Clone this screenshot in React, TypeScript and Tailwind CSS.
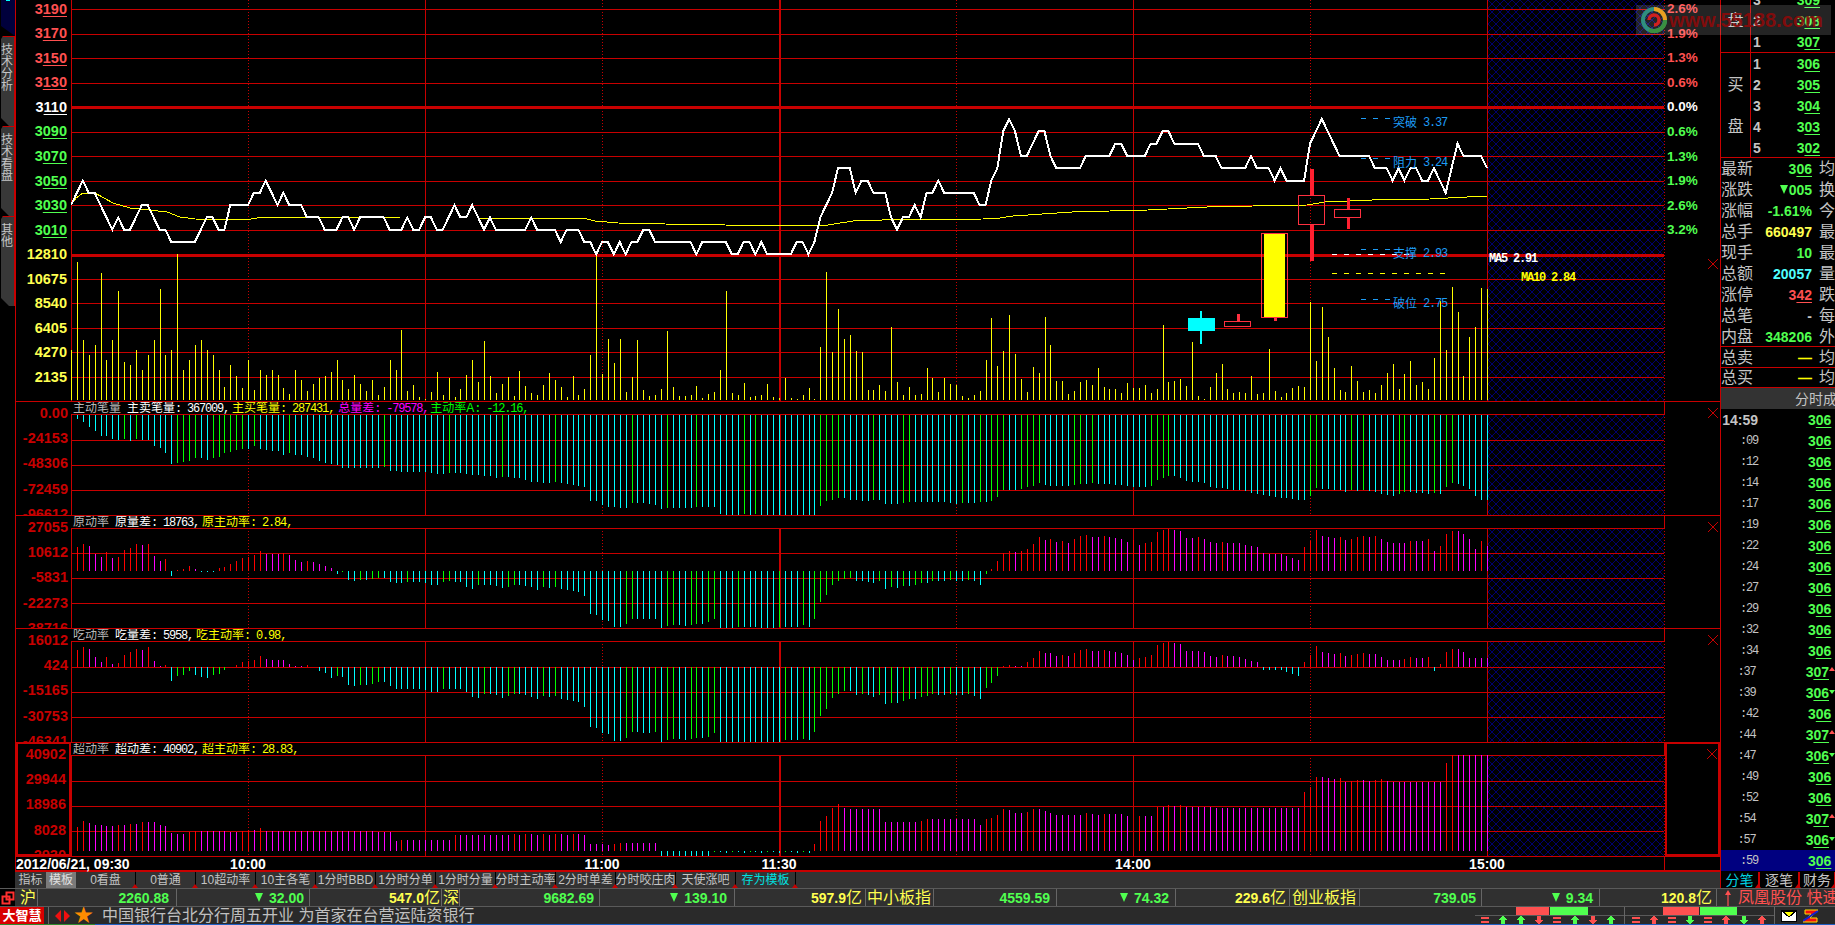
import React from "react";

const P = (s: string): number[] =>
  s.trim().split(/\s+/).flatMap((t) => {
    const [v, c] = t.split("*");
    return Array(Number(c || 1)).fill(Number(v));
  });

const RED = "#c80000";
const X = (i: number) => Math.round(71 + 5.9 * i);
const VERTS: [number, "dot" | "solid" | "thick"][] = [
  [71, "solid"], [248, "dot"], [425, "solid"], [602, "dot"], [779, "thick"],
  [956, "dot"], [1133, "solid"], [1310, "dot"], [1487, "solid"], [1664, "dot"],
];

const price = P("3 4 5 4*2 3 2 1 2 1*2 2 3*2 2 1*2 0*5 1 2*2 1*2 3*4 4*2 5 4 3 4 3*3 2*3 1*3 2*2 1 2*5 1*3 2 1*2 2*2 1*2 2 3 2*2 3 2 1 2 1*6 2 1*4 0 1*3 0*2 -1 0*2 -1 0 -1 0*2 1*2 0*7 -1 0*5 -1*2 0*2 -1 0 -1*5 0*2 -1 0 2 3 4 6*3 4 5*2 4*3 2 1 2*2 3 2 4*2 5 4*6 3*2 5 6 9 10 9 7*2 8 9*2 7 6*5 7*5 8*2 7*4 8*2 9*2 8*5 7*3 6*5 7 6*3 5 6 5*4 8 9 10 9 8 7*6 6*3 5 6 5 6*2 5*2 6 5 4 6 8 7*4 6");

const avg = "71,205 76,198 83,193 95,193 113,203 130,208 167,212 180,217 195,219 245,220 263,217 293,217 330,217 400,218 480,218 587,219 595,221 618,223 665,224 725,225 807,226 828,225 853,221 882,220 983,219 1000,218 1013,216 1072,212 1148,210 1207,207 1253,206 1307,205 1325,202 1372,200 1430,199 1467,197 1487,196";

const vol = P(`50 138 60 45 55 127 40 60 109 38 35 50 30 45 60 111 45 50 146 30 40 55 60 50 45 30 13 35 24 12 40 10 30 25 30 25 12 6 30 20 9 16 22 24 28 40 20 11 25 16 9 20 5 13 40 30 70 9 15 3 1 8 28 5 22 3 11 25 40 18
59 24 7 16 23 4 29 14 7 5 15 27 20 13 3 24 5 11 45 144 26 61 37 61 8 23 60 10 4 5 11 69 13 4 4 5 14 2 6 8 30 109 7 5 17 3 4 5 16 3 2 22 2 1 5 12 1 53 128 48 91 61 65 49 48 10 10 15 9 73 18 5 13 5 6 32 22 8 22 16 15 4 2 5 9 40 82 34
49 85 46 21 8 33 27 83 55 19 19 6 9 18 20 15 32 13 11 11 7 17 12 12 15 7 11 75 18 19 21 14 58 4 1 13 27 36 11 7 8 7 24 6 7 51 9 3 7 12 14 13 98 39 93 63 32 10 8 34 19 8 10 7 15 27 36 11 26 39 15 18 11 42 99 50 113 88 24 63 73 112 111`);

const p1 = P(`0 4 7 12 16 21 21 24 25 24 26 24 25 25 31 33 38 49 48 47 46 43 43 45 43 42 38 37 35 34 34 31 34 35 36 36 40 38 40 40 42 43 46 48 49 50 53 53 53 53 53 53 53 52 56 56 57 57 57 57 57 58 59 59 58 58 58 59 60 60
61 61 63 62 62 63 63 65 67 67 68 68 67 68 69 70 71 72 86 86 90 92 92 93 93 88 88 88 89 90 94 93 93 93 93 93 92 92 92 92 99 100 100 100 99 100 99 100 100 100 100 100 100 100 100 100 100 91 86 85 83 83 85 85 86 86 85 85 89 89 89 88 87 87 87 87 87 87 87 88 89 88 88 88 87 87 86 82 75 75 75 74 72 71 68 70 71 71 71 71 70 69 69 68 69 69 69 70 70 71 72 72 72 71 65 63 61 61 63 66 67 67 68 72 73 73 74 75 75 76 78 79 80 81 82 83 83 84 85 85 81 73 74 74 75 75 77 75 76 75 76 77 79 80 81 79 77 77 78 78 79 78 79 72 68 69 71 74 81 85 85`).map((v) => -v);

const p2 = P(`0 24 27 25 17 14 19 13 14 21 23 27 26 27 15 10 12 -5 1 2 5 2 -1 -1 -1 3 4 7 10 13 14 16 20 17 17 17 18 16 11 9 10 9 7 5 3 -3 -1 -9 -10 -9 -9 -8 -7 -7 -11 -12 -12 -11 -11 -11 -12 -14 -14 -11 -10 -11 -11 -16 -18 -14
-14 -14 -15 -17 -16 -14 -14 -15 -16 -19 -16 -17 -16 -18 -19 -20 -21 -25 -43 -44 -49 -50 -56 -56 -53 -48 -48 -48 -48 -48 -57 -55 -54 -54 -55 -54 -53 -53 -51 -48 -57 -57 -57 -56 -56 -56 -56 -57 -57 -57 -56 -56 -56 -56 -54 -56 -48 -31 -24 -14 -10 -8 -7 -10 -10 -11 -12 -10 -18 -16 -17 -15 -15 -14 -12 -12 -10 -10 -10 -9 -10 -10 -9 -10 -14 -3 2 10 18 20 19 20 22 27 34 31 32 29 30 28 32 35 36 34 34 35 34 33 32 29 31 26 28 29 39 41 42 41 40 33 33 34 32 29 28 29 28 28 28 26 25 24 18 17 17 17 15 13 11 24 30 41 35 34 33 34 31 32 34 35 34 35 32 29 28 28 28 30 30 30 32 20 25 37 40 40 37 32 22 30 25`);

const p3 = P(`0 17 20 18 10 5 10 3 4 12 15 18 17 20 6 1 2 -14 -9 -8 -4 -8 -10 -11 -8 -7 -3 0 2 5 6 7 11 8 7 7 7 3 1 1 2 0 -4 -6 -11 -9 -10 -18 -19 -18 -18 -17 -15 -15 -19 -22 -22 -22 -22 -22 -23 -25 -25 -22 -22 -22 -22 -25 -30 -31
-27 -27 -28 -31 -29 -27 -27 -28 -30 -32 -29 -30 -29 -32 -33 -34 -35 -40 -60 -61 -66 -67 -74 -74 -71 -65 -65 -66 -66 -65 -75 -73 -72 -72 -73 -72 -71 -71 -70 -66 -75*10 -75 -73 -73 -73 -72 -73 -65 -49 -42 -31 -27 -24 -24 -28 -27 -28 -30 -28 -37 -36 -36 -34 -32 -32 -30 -29 -27 -28 -28 -27 -28 -28 -27 -29 -32 -21 -16 -9 1 2 1 1 5 9 16 14 14 11 12 11 14 17 18 16 16 17 16 15 14 12 7 9 10 12 22 24 25 24 23 16 16 16 15 11 10 12 11 11 10 8 6 5 -3 -3 -3 -3 -5 -7 -9 5 12 21 15 14 13 14 11 12 13 14 13 13 10 7 7 7 8 10 9 9 10 -4 3 15 18 18 15 9 9 9 9`);

const p4 = P(`0 24 30 28 26 26 25 25 26 26 27 27 29 29 29 26 25 18 17 17 19 20 20 20 20 20 20 19 19 20 21 21 23 20 20 20 20 20 20 20 20*10 20 20 19 19 19 10 11*9 16*5
16 16 16 16 16 17 16 17 17 16 17 16 17 17 16 17 17 16 7 7 7 6 7 8*7 -5*9 -1 -1 -2 -1 -1 -2 -1 -1 -2 -1 -1 -2 -1 -1 -2 -1 -2 7 30 35 43 47 43 42*6 29*6 30 32*9 26 32 33 36 42 41 38 38 39 42 42 40 38 36*5 38 37 36 37*4 35 0 35 35 35 44 44 46 45 46 44 44*4 43*15 59 64 74 74 73 72 73 69 70 71 71 70 71 72 70 69*9 88 96*7`);

const barColor = (v: number, prev: number) =>
  v >= 0 ? (v > prev ? "#ff0000" : "#ff00ff") : v <= prev ? "#00ffff" : "#00ff00";

const Pattern = ({ id }: { id: string }) => (
  <defs>
    <pattern id={id} width="8" height="8" patternUnits="userSpaceOnUse">
      <path d="M0 0L8 8M8 0L0 8" stroke="#00006e" strokeWidth="1" />
    </pattern>
  </defs>
);

const Grid = ({ id, top, bottom, lines, thick = [] }: { id: string; top: number; bottom: number; lines: number[]; thick?: number[] }) => (
  <g shapeRendering="crispEdges">
    <Pattern id={id} />
    <rect x="1488" y={top} width="176" height={bottom - top} fill={`url(#${id})`} />
    {lines.map((y) => <rect key={y} x="71" y={y} width="1593" height="1" fill={RED} />)}
    {thick.map((y) => <rect key={y} x="71" y={y - 1} width="1593" height="3" fill={RED} />)}
    {VERTS.map(([x, t]) => t === "dot"
      ? <line key={x} x1={x + 0.5} x2={x + 0.5} y1={top} y2={bottom} stroke={RED} strokeDasharray="1 2" />
      : <rect key={x} x={x} y={top} width={t === "thick" ? 2 : 1} height={bottom - top} fill={RED} />)}
  </g>
);

const Bars = ({ data, base, max }: { data: number[]; base: number; max: number }) => (
  <g shapeRendering="crispEdges">
    {data.map((v, i) => {
      const prev = i ? data[i - 1] : 0;
      const h = Math.min(Math.abs(v), max);
      if (!h) return null;
      return <rect key={i} x={X(i)} y={v > 0 ? base - h : base} width="1" height={h} fill={barColor(v, prev)} />;
    })}
  </g>
);

const Cross = ({ className }: { className: string }) => (
  <svg className={`absolute ${className}`} width="10" height="10" viewBox="0 0 10 10">
    <path d="M0 0L10 10M10 0L0 10" stroke={RED} strokeWidth="1" />
  </svg>
);

const U = ({ v, n = 3 }: { v: string; n?: number }) => (
  <span>
    {v.slice(0, v.length - n)}
    <span className="underline underline-offset-[2px] decoration-1 [text-decoration-skip-ink:none]">{v.slice(-n)}</span>
  </span>
);

const DownTri = ({ c }: { c: string }) => (
  <span className="inline-block w-0 h-0 border-x-[4px] border-x-transparent border-t-[9px]" style={{ borderTopColor: c }} />
);

const PRICE = [
  ["3190", "2.6%", "#ff5050"], ["3170", "1.9%", "#ff5050"], ["3150", "1.3%", "#ff5050"], ["3130", "0.6%", "#ff5050"],
  ["3110", "0.0%", "#ffffff"], ["3090", "0.6%", "#50ff50"], ["3070", "1.3%", "#50ff50"], ["3050", "1.9%", "#50ff50"],
  ["3030", "2.6%", "#50ff50"], ["3010", "3.2%", "#50ff50"],
];

const MONO = "font-['Liberation_Mono','Noto_Sans_CJK_SC',monospace] text-[12px] tracking-[-1.2px]";

const Note = ({ x, y, a, b }: { x: number; y: number; a: string; b: string }) => (
  <div className="absolute flex items-center h-[14px] text-[#1e9cf5] text-[12px] leading-none" style={{ left: x, top: y }}>
    <span>{a}</span>
    <span className={`ml-[6px] ${MONO}`}>{b}</span>
  </div>
);

const MainPanel = () => (
  <div className="flex h-[401px] overflow-hidden">
    <div className="w-[55px] -mt-[3.3px] shrink-0">
      {PRICE.map(([a, , c]) => (
        <div key={a} className="h-[24.55px] flex items-center justify-end pr-[4px] text-[14.5px] font-bold leading-none" style={{ color: c }}>
          <U v={a} />
        </div>
      ))}
      {["12810", "10675", "8540", "6405", "4270", "2135"].map((a) => (
        <div key={a} className="h-[24.55px] flex items-center justify-end pr-[4px] text-[14.5px] font-bold leading-none text-[#ffff50]">{a}</div>
      ))}
    </div>
    <div className="relative w-[1594px] shrink-0">
      <svg width="1594" height="401" viewBox="71 0 1594 401" className="block">
        <Grid id="h0" top={0} bottom={401} lines={[9, 34, 58, 83, 132, 156, 181, 205, 230, 279, 303, 328, 352, 377]} thick={[107, 255]} />
        <g shapeRendering="crispEdges">
          {vol.map((h, i) => <rect key={i} x={X(i)} y={400 - h} width="1" height={h} fill="#ffff00" />)}
        </g>
        <polyline shapeRendering="crispEdges" points={avg} fill="none" stroke="#ffff00" strokeWidth="1" />
        <polyline shapeRendering="crispEdges" points={price.map((v, i) => `${71 + 5.9 * i},${(242 - 12.3 * v).toFixed(1)}`).join(" ")} fill="none" stroke="#ffffff" strokeWidth="2" />
        <g shapeRendering="crispEdges">
          <rect x="1188" y="318" width="27" height="13" fill="#00ffff" />
          <rect x="1200" y="311" width="2" height="33" fill="#00ffff" />
          <rect x="1224.5" y="321.5" width="26" height="5" fill="none" stroke="#ff3040" />
          <rect x="1237" y="314" width="3" height="7" fill="#ff3040" />
          <rect x="1264" y="233" width="21" height="85" fill="#ffff00" />
          <rect x="1261.5" y="233.5" width="26" height="84" fill="none" stroke="#ff3040" />
          <rect x="1274" y="318" width="3" height="3" fill="#ff3040" />
          <rect x="1298.5" y="195.5" width="26" height="29" fill="none" stroke="#ff3040" />
          <rect x="1310" y="169" width="4" height="26" fill="#ff2030" />
          <rect x="1310" y="225" width="4" height="36" fill="#ff2030" />
          <rect x="1334.5" y="209.5" width="26" height="8" fill="none" stroke="#ff3040" />
          <rect x="1347" y="198" width="3" height="11" fill="#ff2030" />
          <rect x="1347" y="218" width="3" height="11" fill="#ff2030" />
          {[118, 158, 249, 299].map((y) => <line key={y} x1="1361" x2="1390" y1={y + 0.5} y2={y + 0.5} stroke="#1e9cf5" strokeDasharray="5 7" />)}
          <line x1="1332" x2="1409" y1="254.5" y2="254.5" stroke="#ffffff" strokeDasharray="5 7" />
          <line x1="1332" x2="1446" y1="273.5" y2="273.5" stroke="#ffff00" strokeDasharray="5 7" />
        </g>
      </svg>
      <Note x={1322} y={116} a="突破" b="3.37" />
      <Note x={1322} y={156} a="阻力" b="3.24" />
      <Note x={1322} y={247} a="支撑" b="2.93" />
      <Note x={1322} y={297} a="破位" b="2.75" />
      <div className={`absolute left-[1418px] top-[252px] leading-[14px] text-white font-bold ${MONO}`}>MA5 2.91</div>
      <div className={`absolute left-[1450px] top-[271px] leading-[14px] text-[#ffff00] font-bold ${MONO}`}>MA10 2.84</div>
    </div>
    <div className="relative w-[55px] shrink-0 -mt-[3.3px]">
      {PRICE.map(([a, b, c]) => (
        <div key={a} className="h-[24.55px] flex items-center pl-[2px] text-[13.5px] font-bold leading-none" style={{ color: c }}>{b}</div>
      ))}
      <Cross className="top-[262px] right-[2px]" />
    </div>
  </div>
);

type Seg = { t: string; c: string; v?: string };

const Panel = ({ id, top, h, labels, head, data, base, lines, thick, selected, max, gaps }: {
  id: string; top: number; h: number; labels: string[]; head: Seg[]; data: number[]; base: number; lines: number[]; thick?: number[]; selected?: boolean; max: number; gaps: number[];
}) => (
  <div className="flex overflow-hidden border-t border-[#c80000]" style={{ height: h }}>
    <div className={`w-[55px] shrink-0 overflow-hidden ${selected ? "border-2 border-[#c80000] -mt-px" : ""}`}>
      <div className={selected ? "-mt-[2px]" : "-mt-px"}>
        {labels.map((l) => (
          <div key={l} className="h-[25.1px] flex items-center justify-end pr-[3px] text-[14.5px] font-bold leading-none text-[#c80000]">{l}</div>
        ))}
      </div>
    </div>
    <div className="w-[1594px] shrink-0 flex flex-col">
      <div className="h-[12px] shrink-0 flex items-center pl-[2px] text-[12px] leading-none border-r border-[#c80000]">
        {head.map((s, i) => (
          <span key={i} className="whitespace-nowrap" style={{ color: s.c, marginLeft: gaps[i] }}>
            {s.t}
            {s.v && <span className={MONO}>: {s.v},</span>}
          </span>
        ))}
      </div>
      <svg width="1594" height={h - 13} viewBox={`71 ${top + 13} 1594 ${h - 13}`} className="block shrink-0">
        <Grid id={id} top={top + 13} bottom={top + h} lines={lines} thick={thick} />
        <Bars data={data} base={base} max={max} />
      </svg>
    </div>
    <div className={`relative w-[55px] shrink-0 ${selected ? "border-2 border-[#c80000] -mt-px" : ""}`}>
      <Cross className={selected ? "top-[5px] right-px" : "top-[6px] right-[2px]"} />
    </div>
  </div>
);

const TimeAxis = () => (
  <div className="h-[16px] flex items-center border-t border-[#c80000] border-b-2 box-border text-white text-[14px] font-bold leading-none">
    <div className="w-[202px] shrink-0 whitespace-nowrap">2012/06/21, 09:30</div>
    <div className="w-[60px] text-center">10:00</div>
    <div className="ml-[294px] w-[60px] text-center">11:00</div>
    <div className="ml-[117px] w-[60px] text-center">11:30</div>
    <div className="ml-[294px] w-[60px] text-center">14:00</div>
    <div className="ml-[294px] w-[60px] text-center">15:00</div>
    <div className="ml-[147px] h-full border-l border-[#c80000]" />
  </div>
);

const Tab = ({ t }: { t: string }) => (
  <div className="h-[90px] w-[15px] bg-[#383838] border-r border-t border-[#c80000] [clip-path:polygon(3px_0,100%_0,100%_100%,9px_100%,1px_calc(100%-8px),1px_3px)] flex flex-col items-center pt-[7px] text-[12px] leading-[12px] text-[#c4c4c4]">
    {t.split("").map((c, i) => <span key={i}>{c}</span>)}
  </div>
);

const LeftTabs = () => (
  <div className="w-[15px] shrink-0 flex flex-col">
    <div className="h-[36px] bg-[#00003c] [clip-path:polygon(1px_0,100%_0,100%_100%,1px_26px)] relative">
      <div className="absolute top-0 left-[6px] w-[4px] h-px bg-[#00ffff]" />
    </div>
    <Tab t="技术分析" />
    <Tab t="技术看盘" />
    <Tab t="其他" />
  </div>
);

const W = "text-[#c4c4c4]";
const G = "#50ff50";

const OrderRow = ({ label, rank, v }: { label?: string; rank: number; v: string }) => (
  <div className="h-[21px] flex items-center shrink-0">
    <div className={`w-[29px] text-center text-[16px] leading-none ${W}`}>{label}</div>
    <div className="h-full w-[70px] border-l border-[#c80000] flex items-center justify-between pl-[2px]">
      <span className="text-[14px] font-bold leading-none text-[#c4c4c4]">{rank}</span>
      <span className="text-[14px] font-bold leading-none" style={{ color: G }}><U v={v} n={2} /></span>
    </div>
  </div>
);

const INFO: [string, React.ReactNode, string, string][] = [
  ["最新", <U v="306" n={2} />, G, "均"],
  ["涨跌", <span className="flex items-center justify-end"><DownTri c={G} /><span className="ml-px">005</span></span>, G, "换"],
  ["涨幅", "-1.61%", G, "今"],
  ["总手", "660497", "#ffff50", "最"],
  ["现手", "10", G, "最"],
  ["总额", "20057", "#50ffff", "量"],
  ["涨停", <U v="342" n={2} />, "#ff5050", "跌"],
  ["总笔", "-", "#c4c4c4", "每"],
  ["内盘", "348206", G, "外"],
];

const InfoRow = ({ a, v, c, r, h = 21 }: { a: string; v: React.ReactNode; c: string; r: string; h?: number }) => (
  <div className="flex items-center shrink-0" style={{ height: h }}>
    <span className={`w-[32px] text-[16px] leading-none whitespace-nowrap ${W}`}>{a}</span>
    <span className="w-[67px] text-right text-[14px] font-bold leading-none" style={{ color: c }}>{v}</span>
    <span className={`ml-[7px] text-[16px] leading-none ${W}`}>{r}</span>
  </div>
);

const TICKS: [string, string?][] = [
  ["09"], ["12"], ["14"], ["17"], ["19"], ["22"], ["24"], ["27"], ["29"], ["32"], ["34"],
  ["37", "u"], ["39", "d"], ["42"], ["44", "u"], ["47", "d"], ["49"], ["52"], ["54", "u"], ["57", "d"], ["59"],
];

const TickRow = ({ t, v, d, bold, on }: { t: string; v: string; d?: string; bold?: boolean; on?: boolean }) => (
  <div className={`h-[21px] flex items-center shrink-0 ${on ? "bg-[#000080]" : ""}`}>
    <span className={`w-[37px] text-right leading-none ${W} ${bold ? "text-[14px] font-bold" : MONO}`}>{t}</span>
    <span className="ml-[50px] w-[24px] text-[14px] font-bold leading-none" style={{ color: G }}><U v={v} n={2} /></span>
    {d === "u" && <span className="w-0 h-0 border-x-[3px] border-x-transparent border-b-[4px] border-b-[#ff5050] -mt-[6px]" />}
    {d === "d" && <span className="w-0 h-0 border-x-[3px] border-x-transparent border-t-[4px] border-t-[#50ff50] -mt-[2px]" />}
  </div>
);

const Watermark = () => (
  <div className="absolute top-[5px] left-[-85px] w-[195px] h-[30px] bg-[#ffffff24] flex items-center z-10">
    <svg width="26" height="26" viewBox="0 0 26 26" className="ml-[5px] shrink-0">
      <circle cx="13" cy="13" r="11" fill="none" stroke="#2f8f7f" strokeWidth="4" />
      <path d="M13 2A11 11 0 0 1 24 13" fill="none" stroke="#e8a020" strokeWidth="4" />
      <path d="M24 13A11 11 0 0 1 8 23" fill="none" stroke="#3a8f40" strokeWidth="4" />
      <path d="M8 13A5 5 0 0 1 18 13A5 5 0 0 1 13 18" fill="none" stroke="#d02020" strokeWidth="3.5" />
    </svg>
    <span className="ml-[2px] text-[20px] font-bold leading-none text-[#8c0a0a] opacity-90 whitespace-nowrap">www.55188.com</span>
  </div>
);

const RightColumn = () => (
  <div className="relative w-[115px] h-[872px] shrink-0 border-l border-[#c80000] flex flex-col">
    <Watermark />
    <div className="h-[53px] shrink-0 overflow-hidden flex flex-col justify-end border-b border-[#c80000]">
      <OrderRow rank={3} v="309" />
      <OrderRow rank={2} v="308" label="盘" />
      <OrderRow rank={1} v="307" />
    </div>
    <div className="h-[105px] shrink-0 overflow-hidden border-b border-[#c80000]">
      <OrderRow rank={1} v="306" />
      <OrderRow rank={2} v="305" label="买" />
      <OrderRow rank={3} v="304" />
      <OrderRow rank={4} v="303" label="盘" />
      <OrderRow rank={5} v="302" />
    </div>
    <div className="h-[189px] shrink-0 overflow-hidden border-b border-[#c80000]">
      {INFO.map(([a, v, c, r]) => <InfoRow key={a} a={a} v={v} c={c} r={r} />)}
    </div>
    <div className="h-[21px] shrink-0 overflow-hidden border-b border-[#c80000]">
      <InfoRow a="总卖" v="—" c="#ffff00" r="均" />
    </div>
    <div className="h-[20px] shrink-0 overflow-hidden border-b border-[#c80000]">
      <InfoRow a="总买" v="—" c="#ffff00" r="均" h={19} />
    </div>
    <div className="h-[21px] shrink-0 bg-[#333333] flex items-center pl-[74px] text-[14px] leading-none whitespace-nowrap overflow-hidden text-[#c4c4c4]">分时成交</div>
    <TickRow t="14:59" v="306" bold />
    {TICKS.map(([t, d], i) => (
      <TickRow key={t} t={`:${t}`} v={d === "u" ? "307" : "306"} d={d} on={i === TICKS.length - 1} />
    ))}
  </div>
);

const Tri = () => (
  <span className="absolute bottom-0 right-[-3px] w-0 h-0 border-x-[3px] border-x-transparent border-b-[4px] border-b-[#c80000] z-10" />
);

const BTNS = ["0看盘", "0普通", "10超动率", "10主各笔", "1分时BBD", "1分时分单", "1分时分量", "分时主动率", "2分时单差", "分时咬庄肉", "天使涨吧"];

const Toolbar = () => (
  <div className="h-[16px] flex bg-[#333333] text-[12px] leading-none text-[#c4c4c4] overflow-hidden shrink-0">
    <div className="w-[15px] bg-black shrink-0" />
    <div className="w-[31px] flex items-center justify-center shrink-0">指标</div>
    <div className="w-[30px] flex items-center justify-center bg-[#7a7a7a] text-[#e0e0e0] shrink-0">模板</div>
    {BTNS.map((b) => (
      <div key={b} className="relative w-[60px] flex items-center justify-center whitespace-nowrap shrink-0 border-r border-black">
        {b}<Tri />
      </div>
    ))}
    <div className="relative w-[60px] flex items-center justify-center shrink-0 text-[#00e0e0] border-r border-black">存为模板<Tri /></div>
    <div className="flex-1" />
    <div className="w-[115px] shrink-0 flex bg-black text-[14px]">
      {[["分笔", "text-[#00d0e0]", "w-[39px]"], ["逐笔", "", "w-[40px]"], ["财务", "", "w-[36px]"]].map(([t, c, w]) => (
        <div key={t} className={`relative flex items-center justify-center border-l border-r border-[#c80000] ${c} ${w}`}>{t}<Tri /></div>
      ))}
    </div>
  </div>
);

const Cell = ({ w, end, children }: { w: number; end: number; children: React.ReactNode }) => (
  <div className="flex items-center justify-end shrink-0 h-full whitespace-nowrap border-r border-[#666666]" style={{ width: w, paddingRight: end }}>
    {children}
  </div>
);

const Num = ({ v, c = G }: { v: string; c?: string }) => <span className="text-[14px] font-bold leading-none" style={{ color: c }}>{v}</span>;
const Down = ({ v }: { v: string }) => (
  <span className="flex items-center text-[14px] font-bold leading-none" style={{ color: G }}><span className="flex mr-[6px]"><DownTri c={G} /></span>{v}</span>
);
const Yi = ({ v }: { v: string }) => (
  <span className="flex items-center leading-none text-[#ffff50]"><span className="text-[14px] font-bold">{v}</span><span className="text-[16px]">亿</span></span>
);
const Nm = ({ t }: { t: string }) => <span className="text-[16px] leading-none text-[#ffff50]">{t}</span>;

const Stats = () => (
  <div className="h-[18px] flex bg-[#303030] border-t border-[#5a5a5a] overflow-hidden shrink-0">
    <div className="w-[15px] shrink-0 flex items-center justify-center bg-black">
      <svg width="14" height="14" viewBox="0 0 14 14"><rect x="1.5" y="5.5" width="7" height="7" fill="none" stroke="#ff3030" strokeWidth="2" /><rect x="5.5" y="1.5" width="7" height="7" fill="none" stroke="#ff3030" strokeWidth="2" /></svg>
    </div>
    <Cell w={23} end={1}><Nm t="沪" /></Cell>
    <Cell w={139} end={7}><Num v="2260.88" /></Cell>
    <Cell w={133} end={5}><Down v="32.00" /></Cell>
    <Cell w={132} end={1}><Yi v="547.0" /></Cell>
    <Cell w={18} end={0}><Nm t="深" /></Cell>
    <Cell w={140} end={5}><Num v="9682.69" /></Cell>
    <Cell w={135} end={7}><Down v="139.10" /></Cell>
    <Cell w={131} end={3}><Yi v="597.9" /></Cell>
    <Cell w={68} end={2}><Nm t="中小板指" /></Cell>
    <Cell w={123} end={6}><Num v="4559.59" /></Cell>
    <Cell w={119} end={6}><Down v="74.32" /></Cell>
    <Cell w={114} end={3}><Yi v="229.6" /></Cell>
    <Cell w={70} end={3}><Nm t="创业板指" /></Cell>
    <Cell w={122} end={5}><Num v="739.05" /></Cell>
    <Cell w={118} end={6}><Down v="9.34" /></Cell>
    <Cell w={117} end={4}><Yi v="120.8" /></Cell>
    <div className="flex items-center pl-[8px] text-[#ff5050] text-[16px] leading-none whitespace-nowrap">
      <svg width="6" height="16" viewBox="0 0 6 16" className="mr-[7px] shrink-0"><path d="M3 0L6 5H3.6V16H2.4V5H0Z" fill="#ff5050" /></svg>
      <span>凤凰股份 快速</span>
    </div>
  </div>
);

const Arrow = ({ k }: { k: string }) => {
  const c = k.endsWith("g") ? "#50ff50" : "#ff5050";
  return (
    <div className="w-[18px] flex justify-center shrink-0">
      <svg width="10" height="8" viewBox="0 0 10 8" shapeRendering="crispEdges">
        {k === "=" && <path d="M1 1H9V3H1ZM1 5H9V7H1Z" fill="#ff5050" />}
        {k[0] === "u" && <path d="M5 0L10 4H7V8H3V4H0Z" fill={c} />}
        {k[0] === "d" && <path d="M5 8L10 4H7V0H3V4H0Z" fill={c} />}
      </svg>
    </div>
  );
};

const Widget = ({ ml, red, green, items, pad }: { ml: number; red: number; green: number; items: string[]; pad: number }) => (
  <div className="w-[150px] shrink-0 flex flex-col border-r border-[#666666]">
    <div className="h-[8px] flex border-b border-[#5a5a5a] box-content">
      <div className="bg-[#ff5050]" style={{ marginLeft: ml, width: red }} />
      <div className="bg-[#50ff50] ml-px" style={{ width: green }} />
    </div>
    <div className="flex-1 flex items-center" style={{ paddingLeft: pad }}>
      {items.map((k, i) => <Arrow key={i} k={k} />)}
    </div>
  </div>
);

const Ticker = () => (
  <div className="h-[18px] flex items-stretch bg-[#2a2a2a] border-t border-[#5a5a5a] overflow-hidden shrink-0">
    <div className="w-[44px] shrink-0 bg-[#d80000] flex items-center justify-center text-[13px] font-bold leading-none text-white whitespace-nowrap">大智慧</div>
    <div className="w-[51px] shrink-0 flex items-center border-l border-[#666666] ml-[4px] pl-[6px] gap-[3px]">
      <svg width="6" height="12" viewBox="0 0 6 12"><path d="M6 0V12L0 6Z" fill="#f01010" /></svg>
      <svg width="6" height="12" viewBox="0 0 6 12"><path d="M0 0V12L6 6Z" fill="#f01010" /></svg>
      <span className="text-[19px] leading-none text-[#ff8c00] ml-[1px]">★</span>
    </div>
    <div className="ml-[3px] flex items-center text-[16px] leading-none text-[#c0c0c0] whitespace-nowrap">中国银行台北分行周五开业 为首家在台营运陆资银行</div>
    <div className="flex-1" />
    <Widget ml={41} red={33} green={38} pad={1} items={["=", "ug", "ug", "dr", "=", "ug", "dr", "ug"]} />
    <Widget ml={38} red={36} green={37} pad={2} items={["=", "ur", "=", "dg", "=", "ur", "dg", "ur"]} />
    <div className="w-[60px] shrink-0 flex items-center pl-[6px]">
      <svg width="16" height="12" viewBox="0 0 16 12" shapeRendering="crispEdges">
        <rect x="0.5" y="0.5" width="15" height="11" fill="#ffffff" stroke="#000000" />
        <path d="M1 1H15L8 7Z" fill="#ffff00" stroke="#000000" strokeWidth="1" />
      </svg>
      <svg width="16" height="14" viewBox="0 0 16 14" className="ml-[6px]">
        <path d="M2 1H15L7 9H14V13H0L8 5H2Z" fill="#f01010" stroke="#ffe000" strokeWidth="1" />
        <path d="M0 12L15 2" stroke="#1020d0" strokeWidth="2" />
      </svg>
    </div>
  </div>
);

const heads: { head: Seg[]; gaps: number[] }[] = [
  { head: [{ t: "主动笔量", c: "#b8b8b8" }, { t: "主卖笔量", c: "#ffffff", v: "367009" }, { t: "主买笔量", c: "#ffff00", v: "287431" }, { t: "总量差", c: "#ff00ff", v: "-79578" }, { t: "主动率A", c: "#00ff00", v: "-12.16" }], gaps: [0, 6, 3, 4, 2] },
  { head: [{ t: "原动率", c: "#b8b8b8" }, { t: "原量差", c: "#ffffff", v: "18763" }, { t: "原主动率", c: "#ffff00", v: "2.84" }], gaps: [0, 6, 3] },
  { head: [{ t: "吃动率", c: "#b8b8b8" }, { t: "吃量差", c: "#ffffff", v: "5958" }, { t: "吃主动率", c: "#ffff00", v: "0.98" }], gaps: [0, 6, 3] },
  { head: [{ t: "超动率", c: "#b8b8b8" }, { t: "超动差", c: "#ffffff", v: "40902" }, { t: "超主动率", c: "#ffff00", v: "28.83" }], gaps: [0, 6, 3] },
];

export default function App() {
  return (
    <div className="w-[1835px] h-[925px] bg-black flex flex-col overflow-hidden font-['Liberation_Sans','Noto_Sans_CJK_SC',sans-serif]">
      <div className="h-[872px] flex shrink-0">
        <LeftTabs />
        <div className="w-[1705px] shrink-0 border-l border-[#c80000] flex flex-col overflow-hidden">
          <MainPanel />
          <Panel id="h1" top={401} h={114} labels={["0.00", "-24153", "-48306", "-72459", "-96612"]} head={heads[0].head} gaps={heads[0].gaps} data={p1} base={415} lines={[414, 440, 465, 490]} max={100} />
          <Panel id="h2" top={515} h={113} labels={["27055", "10612", "-5831", "-22273", "-38716"]} head={heads[1].head} gaps={heads[1].gaps} data={p2} base={571} lines={[528, 553, 578, 603]} max={100} />
          <Panel id="h3" top={628} h={114} labels={["16012", "424", "-15165", "-30753", "-46341"]} head={heads[2].head} gaps={heads[2].gaps} data={p3} base={667} lines={[641, 667, 692, 717]} max={100} />
          <Panel id="h4" top={742} h={114} selected labels={["40902", "29944", "18986", "8028", "-2930"]} head={heads[3].head} gaps={heads[3].gaps} data={p4} base={851} lines={[755, 781, 806, 831]} max={96} />
          <TimeAxis />
        </div>
        <RightColumn />
      </div>
      <Toolbar />
      <Stats />
      <Ticker />
      <div className="h-px flex shrink-0">
        <div className="w-[95px] bg-[#2e8b2e]" />
        <div className="flex-1 bg-[#1f5fc4]" />
      </div>
    </div>
  );
}
